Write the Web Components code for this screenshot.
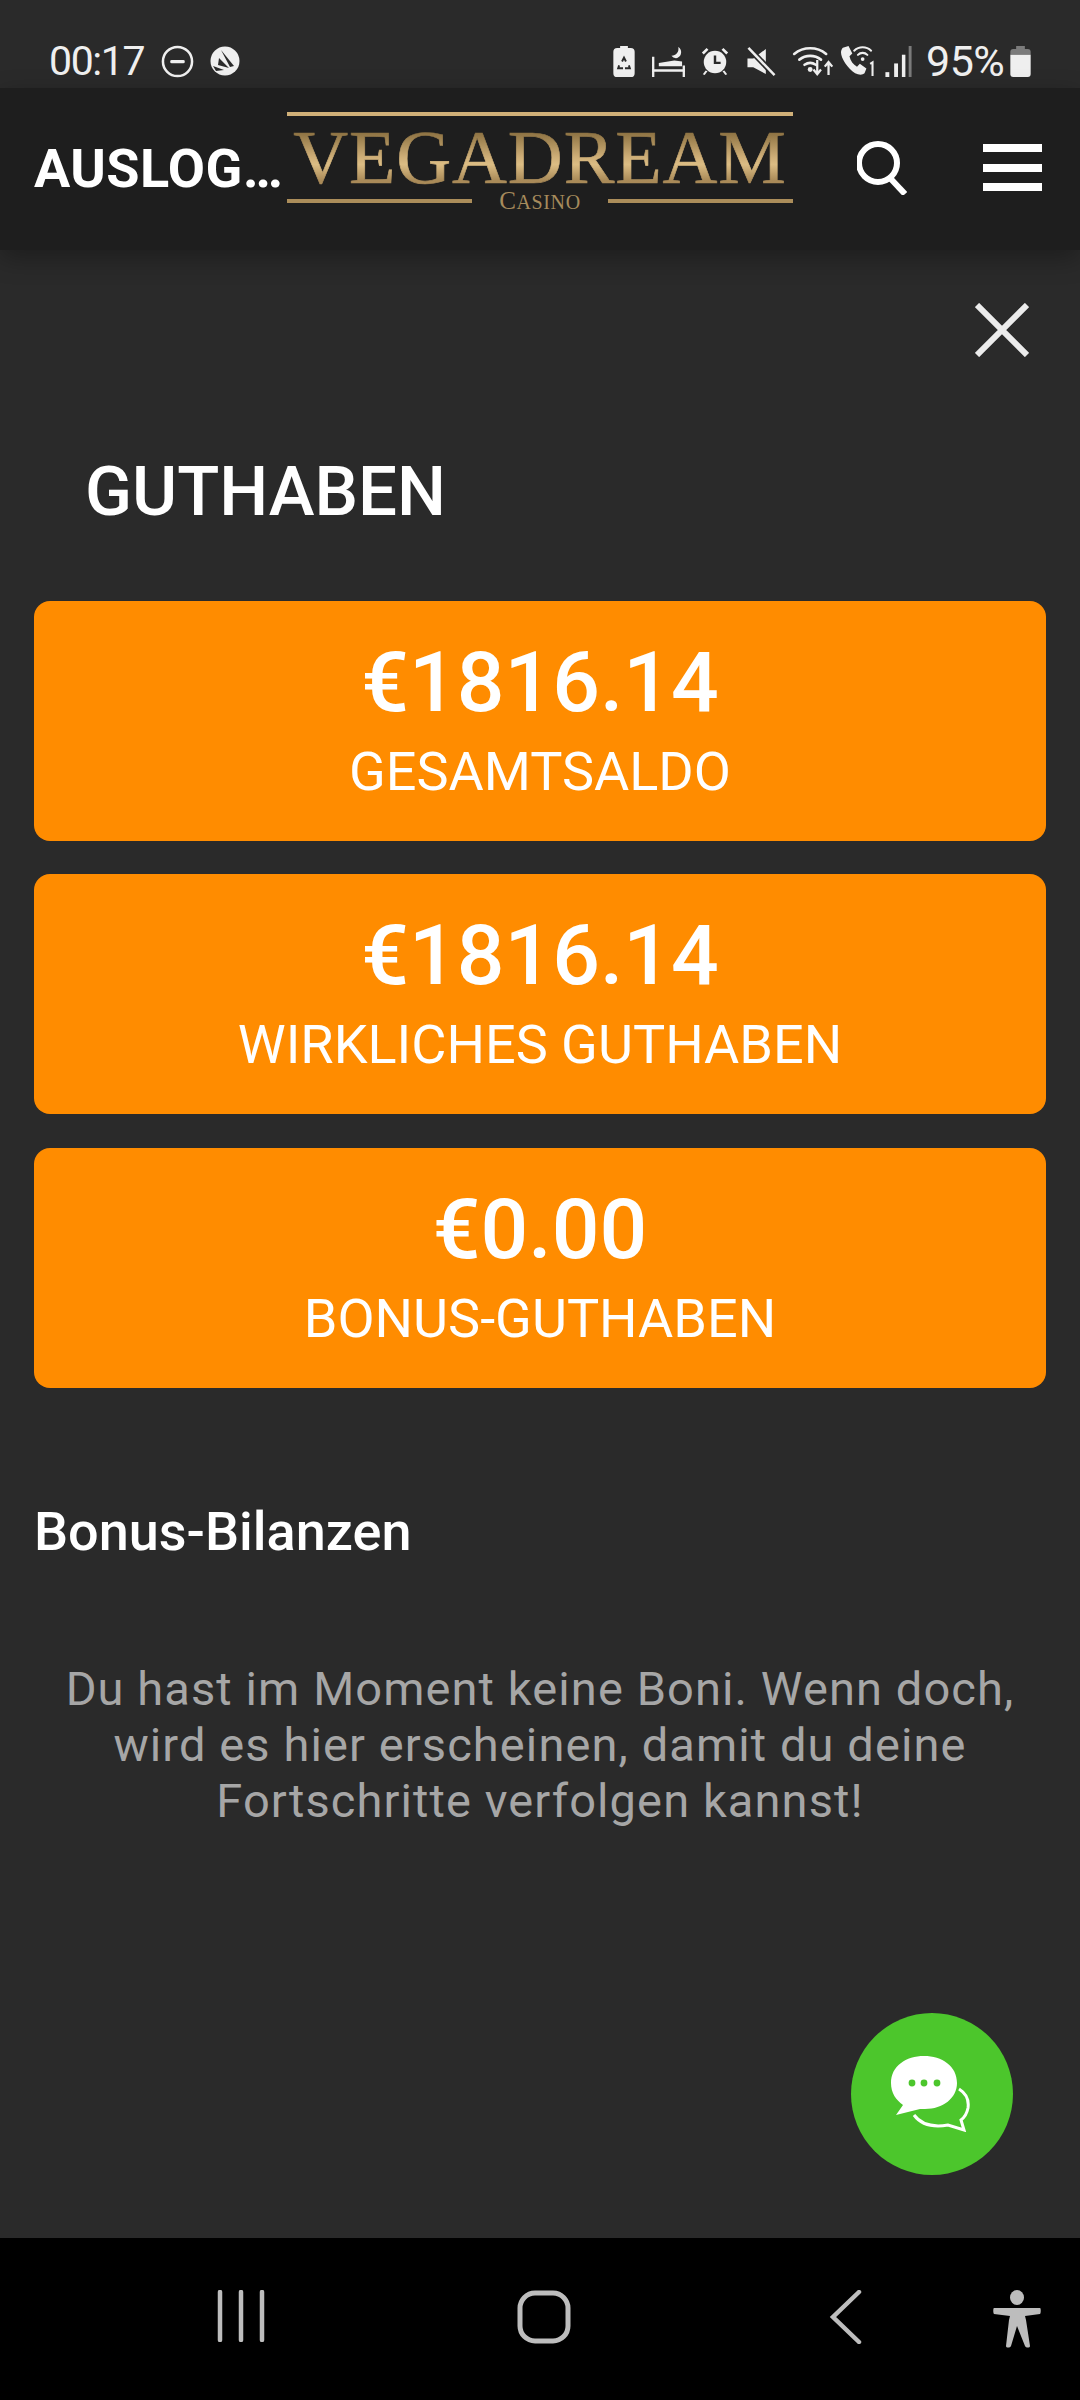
<!DOCTYPE html>
<html lang="de">
<head>
<meta charset="utf-8">
<title>Guthaben</title>
<style>
  html, body { margin: 0; padding: 0; background: #2a2a2a; }
  body { font-family: Roboto, "Noto Sans", sans-serif; color: #fff; width: 1080px; height: 2400px; overflow: hidden; }
  balance-page { height: 2400px; }
</style>
</head>
<body>
<balance-page>
  <status-bar slot="status"></status-bar>
  <app-header slot="header" heading="AUSLOG…"></app-header>
  <balance-card amount="€1816.14" label="GESAMTSALDO"></balance-card>
  <balance-card amount="€1816.14" label="WIRKLICHES GUTHABEN"></balance-card>
  <balance-card amount="€0.00" label="BONUS-GUTHABEN"></balance-card>
  <chat-fab slot="fab"></chat-fab>
  <nav-bar slot="nav"></nav-bar>
</balance-page>

<script>
const statusTemplate = document.createElement('template')
statusTemplate.innerHTML = `
  <style>
    :host { display: flex; align-items: center; box-sizing: border-box; height: 88px; padding: 34px 49px 0 49px; background: #2a2a2a; color: #efefef; }
    .time { font-size: 41px; line-height: 50px; letter-spacing: -1.4px; width: 94px; white-space: nowrap; }
    .left { display: flex; align-items: center; gap: 16px; margin-left: 18px; }
    .right { display: flex; align-items: center; margin-left: auto; }
    .pct { font-size: 43px; line-height: 50px; letter-spacing: -0.5px; width: 77px; margin: 0 7px 0 14px; white-space: nowrap; }
    svg { display: block; fill: #efefef; }
  </style>
  <span class="time">00:17</span>
  <div class="left">
    <svg width="33" height="33" viewBox="0 0 34 34"><circle cx="17" cy="17" r="15" fill="none" stroke="#efefef" stroke-width="2.6"/><rect x="9.5" y="15.5" width="15" height="3.4" rx="1.5"/></svg>
    <svg width="30" height="30" viewBox="0 0 30 30"><circle cx="15" cy="15" r="14.5"/><path d="M11 4 L24 20 L20 21 Z M9 12 L19 22 L8 19 Z M3 20 L14 24 L6 25 Z" fill="#2a2a2a"/></svg>
  </div>
  <div class="right">
    <svg width="22" height="31" viewBox="0 0 22 32" style="margin-right:17px"><path d="M7 0h8v2h3a4 4 0 0 1 4 4v22a4 4 0 0 1-4 4H4a4 4 0 0 1-4-4V6a4 4 0 0 1 4-4h3z"/><path d="M9 16l2-4 2 4M6 20l-1 3h5M16 20l1 3h-5" fill="none" stroke="#2a2a2a" stroke-width="2"/></svg>
    <svg width="33" height="31" viewBox="0 0 34 32" style="margin-right:15px"><path d="M0 11h2.400v21H0z M31.600 20h2.400v12h-2.400z M2 24h30v2.600H2z"/><path d="M7 21v-3.500l16-2.500 8 1v5z"/><path d="M27 1a6.400 6.400 0 0 1-1 11.400 6 6 0 0 1-6-2.400 7 7 0 0 0 7-9z"/></svg>
    <svg width="30" height="30" viewBox="0 0 30 32" style="margin-right:16px"><circle cx="15" cy="17" r="12"/><path d="M1 7l5-5 2 2-5 5zM29 7l-5-5-2 2 5 5zM5 26l-3 4 2 1 3-4zM25 26l3 4-2 1-3-4z"/><path d="M15 10v8h6" fill="none" stroke="#2a2a2a" stroke-width="2.6"/></svg>
    <svg width="30" height="29" viewBox="0 0 30 30" style="margin-right:15px"><path d="M0 11h6L19 1v26L6 20H0z" transform="translate(1 1)"/><path d="M2 1l27 28" stroke="#2a2a2a" stroke-width="6"/><path d="M2 1l27 28" stroke="#efefef" stroke-width="2.6"/></svg>
    <svg width="44" height="32" viewBox="0 0 43 34" style="margin-right:5px"><g fill="none" stroke="#efefef" stroke-width="2.8" stroke-linecap="round"><path d="M1.500 9.500a27 27 0 0 1 34 0"/><path d="M7 15.500a19 19 0 0 1 23 0"/><path d="M12.500 21a10.500 10.500 0 0 1 12 0"/></g><circle cx="18.500" cy="26" r="2.600"/><path d="M29 16v14M25 26l4 5 4-5" fill="none" stroke="#efefef" stroke-width="2.400" transform="translate(-3 0)"/><path d="M38 32V19M34 23l4-5 4 5" fill="none" stroke="#efefef" stroke-width="2.400"/></svg>
    <svg width="34" height="32" viewBox="0 0 36 34" style="margin-right:11px"><path d="M3 3l6-2 4 8-3 3c1 5 4 9 8 11l3-3 7 5-2 5c-2 2-6 2-10 0C8 25 1 14 1 8c0-2 1-4 2-5z"/><g fill="none" stroke="#efefef" stroke-width="2.200" stroke-linecap="round"><path d="M15 6a13 13 0 0 1 18 0"/><path d="M19 10.500a7 7 0 0 1 10 0"/></g><circle cx="24" cy="15" r="2"/><path d="M32 20l2.500-1.500V33" fill="none" stroke="#efefef" stroke-width="2.200"/></svg>
    <svg width="27" height="31" viewBox="0 0 27 32"><rect x="0" y="27" width="4" height="5"/><rect x="9" y="18" width="4" height="14"/><rect x="17" y="9" width="3.600" height="23"/><rect x="24" y="0" width="3" height="32" fill="#7b7b7b"/></svg>
    <span class="pct">95%</span>
    <svg width="21" height="31" viewBox="0 0 21 32"><path d="M6 0h9v3h3a3 3 0 0 1 3 3v3H0V6a3 3 0 0 1 3-3h3z" fill="#7b7b7b"/><path d="M0 9h21v20a3 3 0 0 1-3 3H3a3 3 0 0 1-3-3z"/></svg>
  </div>
`
customElements.define('status-bar', class extends HTMLElement {
  constructor() {
    super()
    this.attachShadow({ mode: 'open' }).append(statusTemplate.content.cloneNode(true))
  }
})

const headerTemplate = document.createElement('template')
headerTemplate.innerHTML = `
  <style>
    :host { display: flex; align-items: center; box-sizing: border-box; height: 162px; background: #1e1e1e; box-shadow: 0 8px 24px rgba(0, 0, 0, 0.3); position: relative; z-index: 2; }
    .title { box-sizing: border-box; width: 287px; padding-left: 34px; font-size: 54px; font-weight: 700; line-height: 60px; letter-spacing: 0.4px; white-space: nowrap; color: #fff; }
    .logo { width: 506px; display: flex; flex-direction: column; margin-top: -13px; }
    .rule { height: 4px; background: #d0b078; }
    .word { font-family: "Liberation Serif", serif; font-size: 76px; line-height: 62px; height: 62px; margin-top: 10px; letter-spacing: 0.9px; text-align: center; white-space: nowrap;
      background: linear-gradient(180deg, #8f7444 12%, #ceae77 50%, #dcbd84 62%, #a98a58 88%); -webkit-background-clip: text; background-clip: text; color: transparent; -webkit-text-stroke: 0.7px transparent; }
    .bottom { display: flex; align-items: center; gap: 27px; margin-top: 1px; height: 24px; }
    .bottom i { flex: 1; height: 4px; background: #ab8d5a; }
    .casino { font-family: "Liberation Serif", serif; font-size: 25px; line-height: 24px; letter-spacing: 0.6px; color: #a68b5c; }
    .casino small { font-size: 20px; }
    .actions { display: flex; align-items: center; margin: -3px 0 0 64px; }
    svg { display: block; }
    .menu { display: flex; flex-direction: column; gap: 11.500px; width: 59px; margin-left: 76px; }
    .menu i { height: 8px; background: #fff; }
  </style>
  <div class="title"></div>
  <div class="logo">
    <div class="rule"></div>
    <div class="word">VEGADREAM</div>
    <div class="bottom"><i></i><span class="casino">C<small>ASINO</small></span><i></i></div>
  </div>
  <div class="actions">
    <svg width="50" height="54" viewBox="0 0 50 54" fill="none" stroke="#fff" stroke-width="6"><circle cx="21" cy="22" r="19"/><path d="M33 37l15 16"/></svg>
    <div class="menu"><i></i><i></i><i></i></div>
  </div>
`
customElements.define('app-header', class extends HTMLElement {
  constructor() {
    super()
    const root = this.attachShadow({ mode: 'open' })
    root.append(headerTemplate.content.cloneNode(true))
    root.querySelector('.title').textContent = this.getAttribute('heading')
  }
})

const cardTemplate = document.createElement('template')
cardTemplate.innerHTML = `
  <style>
    :host { display: flex; flex-direction: column; align-items: center; box-sizing: border-box; height: 240px; padding-top: 34px; background: #ff8c00; border-radius: 16px; color: #fff; }
    .amount { font-size: 84px; font-weight: 500; line-height: 96px; }
    .label { font-size: 54px; line-height: 60px; margin-top: 11px; }
  </style>
  <div class="amount"></div>
  <div class="label"></div>
`
customElements.define('balance-card', class extends HTMLElement {
  constructor() {
    super()
    const root = this.attachShadow({ mode: 'open' })
    root.append(cardTemplate.content.cloneNode(true))
    root.querySelector('.amount').textContent = this.getAttribute('amount')
    root.querySelector('.label').textContent = this.getAttribute('label')
  }
})

const fabTemplate = document.createElement('template')
fabTemplate.innerHTML = `
  <style>
    :host { position: absolute; left: 851px; top: 2013px; width: 162px; height: 162px; border-radius: 50%; background: #4cc62c; display: flex; align-items: center; justify-content: center; }
    svg { display: block; }
  </style>
  <svg width="82" height="76" viewBox="0 0 82 76">
    <path d="M33 0C15 0 0 10 0 27c0 10 5 17 12 22L5 59l24-6c2 0 3 0 5 0 18 0 32-11 32-26C66 10 51 0 33 0z" fill="#fff"/>
    <g fill="#4cc62c"><circle cx="21" cy="27" r="3.400"/><circle cx="33" cy="27" r="3.400"/><circle cx="46" cy="27" r="3.400"/></g>
    <path d="M68 33c8 5 10 12 9 19-1 5-3 9-7 12l3 10-16-5c-12 2-26 1-34-10" fill="none" stroke="#fff" stroke-width="3"/>
  </svg>
`
customElements.define('chat-fab', class extends HTMLElement {
  constructor() {
    super()
    this.attachShadow({ mode: 'open' }).append(fabTemplate.content.cloneNode(true))
  }
})

const navTemplate = document.createElement('template')
navTemplate.innerHTML = `
  <style>
    :host { display: block; height: 162px; background: #000; }
    .row { display: flex; align-items: flex-start; height: 100%; padding: 52px 0 0 217px; box-sizing: border-box; }
    svg { display: block; fill: none; stroke: #bdbdbd; stroke-linecap: round; }
  </style>
  <div class="row">
    <svg width="48" height="52" viewBox="0 0 48 52" stroke-width="4.500" style="margin-right:252px"><path d="M3 2v48M24 2v48M45 2v48"/></svg>
    <svg width="54" height="54" viewBox="0 0 54 54" stroke-width="5" style="margin-right:258px"><rect x="3" y="3" width="48" height="48" rx="15"/></svg>
    <svg width="33" height="54" viewBox="0 0 33 54" stroke-width="4.500" style="margin-right:131px"><path d="M30 2L4 27l26 25"/></svg>
    <svg width="48" height="58" viewBox="0 0 48 58" style="stroke:none;fill:#bdbdbd"><ellipse cx="24" cy="7.500" rx="7" ry="7.500"/><path d="M1 18h46c1 0 1 5 0 6l-15 2 1 4 4 26c0 2-4 2-5 0l-8-20-6 20c-1 2-5 2-5 0l3-26 1-4L1 24c-1-1-1-6 0-6z"/></svg>
  </div>
`
customElements.define('nav-bar', class extends HTMLElement {
  constructor() {
    super()
    this.attachShadow({ mode: 'open' }).append(navTemplate.content.cloneNode(true))
  }
})

const pageTemplate = document.createElement('template')
pageTemplate.innerHTML = `
  <style>
    :host { display: flex; flex-direction: column; position: relative; background: #2a2a2a; }
    main { flex: 1; display: flex; flex-direction: column; padding: 0 34px; }
    .close { display: flex; justify-content: flex-end; padding: 53px 17px 0 0; }
    .close svg { display: block; }
    h1 { margin: 97px 0 0; padding-left: 51px; font-size: 69px; font-weight: 500; line-height: 76px; color: #fff; }
    .cards { display: flex; flex-direction: column; gap: 33.300px; margin-top: 71px; }
    h2 { margin: 114px 0 0; font-size: 54px; font-weight: 500; line-height: 60px; color: #fff; }
    p { margin: 99px 0 0; text-align: center; font-size: 47px; line-height: 56px; letter-spacing: 1.100px; color: #a6a6a6; }
  </style>
  <slot name="status"></slot>
  <slot name="header"></slot>
  <main>
    <div class="close">
      <svg width="54" height="54" viewBox="0 0 54 54" stroke="#ececec" stroke-width="6" fill="none"><path d="M2 2l50 50M52 2L2 52"/></svg>
    </div>
    <h1>GUTHABEN</h1>
    <div class="cards"><slot></slot></div>
    <h2>Bonus-Bilanzen</h2>
    <p>Du hast im Moment keine Boni. Wenn doch,<br>wird es hier erscheinen, damit du deine<br>Fortschritte verfolgen kannst!</p>
  </main>
  <slot name="fab"></slot>
  <slot name="nav"></slot>
`
customElements.define('balance-page', class extends HTMLElement {
  constructor() {
    super()
    this.attachShadow({ mode: 'open' }).append(pageTemplate.content.cloneNode(true))
  }
})
</script>
</body>
</html>
